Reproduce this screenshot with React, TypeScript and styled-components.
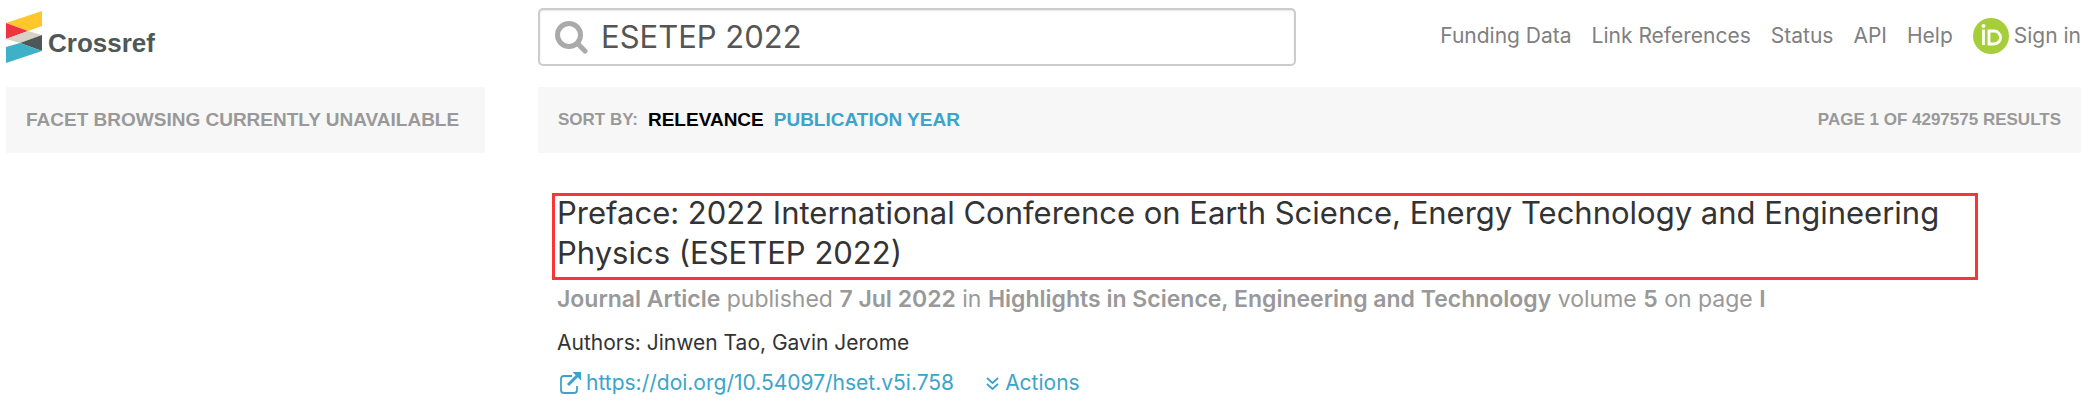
import React from 'react';
import styled, { createGlobalStyle } from 'styled-components';

const GlobalStyle = createGlobalStyle`
  *, *::before, *::after { box-sizing: border-box; }
  body {
    margin: 0;
    background: #fff;
    color: #333;
    font-family: Inter, "Liberation Sans", Arial, sans-serif;
    font-size: 21px;
    line-height: 28px;
  }
  a { color: inherit; text-decoration: none; }
`;

const Page = styled.div`
  padding: 8px 3px 0 6px;
`;

const Columns = styled.div`
  display: grid;
  grid-template-columns: minmax(0, 479fr) minmax(0, 1543fr);
  column-gap: 53px;
`;

const Header = styled(Columns).attrs({ as: 'header' })`
  margin-bottom: 21px;
`;

const Brand = styled.a`
  display: flex;
  align-items: flex-start;
  gap: 6px;
  padding-top: 3px;
`;

const BrandMark = styled.svg`
  width: 36px;
  height: 52px;
`;

const BrandName = styled.span`
  padding-top: 18px;
  color: #4f5858;
  font-family: "Liberation Sans", Arial, sans-serif;
  font-size: 26px;
  font-weight: 700;
  line-height: 28px;
`;

const HeaderMain = styled.div`
  display: flex;
  justify-content: space-between;
  align-items: flex-start;
  gap: 24px;
`;

const SearchForm = styled.form`
  display: flex;
  align-items: center;
  gap: 13px;
  flex: 0 1 758px;
  height: 58px;
  padding: 0 15px;
  border: 2px solid #ccc;
  border-radius: 5px;
  box-shadow: inset 0 1px 2px rgba(0, 0, 0, 0.1);
`;

const SearchIcon = styled.svg`
  flex: none;
  width: 33px;
  height: 33px;
`;

const SearchInput = styled.input`
  flex: 1;
  min-width: 0;
  padding: 0;
  border: 0;
  outline: 0;
  background: transparent;
  color: #555;
  font: inherit;
  font-size: 31px;
  line-height: 40px;
`;

const Nav = styled.nav`
  display: flex;
  align-items: center;
  gap: 20px;
  height: 56px;
  color: #808080;
  white-space: nowrap;
`;

const SignIn = styled.a`
  display: flex;
  align-items: center;
  gap: 5px;
`;

const OrcidIcon = styled.svg`
  width: 36px;
  height: 36px;
`;

const Bar = styled.div`
  display: flex;
  align-items: center;
  gap: 10px;
  height: 66px;
  padding: 0 20px;
  background: #f7f7f7;
  color: #999;
  font-family: "Liberation Sans", Arial, sans-serif;
  font-size: 19px;
  font-weight: 700;
  white-space: nowrap;
`;

const BarLabel = styled.span`
  font-size: 17px;
`;

const ResultCount = styled(BarLabel)`
  margin-left: auto;
`;

const SortLink = styled.a<{ $active?: boolean }>`
  color: ${(p) => (p.$active ? '#000' : '#3ba4cc')};
`;

const Result = styled.article`
  padding: 40px 103px 0 19px;
`;

const Title = styled.h2`
  position: relative;
  margin: 0;
  color: #333;
  font-size: 31px;
  font-weight: 400;
  line-height: 40px;

  /* highlight frame drawn over the heading */
  &::after {
    content: '';
    position: absolute;
    inset: 0 0 -7px -5px;
    border: 3px solid #fb3535;
    pointer-events: none;
  }
`;

const Meta = styled.p`
  margin: 10px 0 0;
  color: #999;
  font-size: 23px;
  line-height: 32px;

  b { font-weight: 600; }
`;

const Authors = styled.p`
  margin: 14px 0 0;
`;

const Links = styled.div`
  display: flex;
  gap: 32px;
  margin-top: 12px;
  color: #3ba4cc;
`;

const IconLink = styled.a`
  display: flex;
  align-items: center;
  gap: 5px;
`;

const ActionsButton = styled.button`
  display: flex;
  align-items: center;
  gap: 6px;
  padding: 0;
  border: 0;
  background: none;
  color: inherit;
  font: inherit;
  cursor: pointer;
`;

const LinkIcon = styled.svg`
  width: 21px;
  height: 22px;
  margin-left: 3px;
`;

const ChevronsIcon = styled.svg`
  width: 13px;
  height: 14px;
`;

const navItems = ['Funding Data', 'Link References', 'Status', 'API', 'Help'];

export default function App() {
  return (
    <>
      <GlobalStyle />
      <Page>
        <Header>
          <Brand href="#">
            <BrandMark viewBox="0 0 36 52" aria-hidden="true">
              <path d="M0 12 36 0v15L22 20Z" fill="#ffc72c" />
              <path d="M0 12 22 20 0 28Z" fill="#ef3340" />
              <path d="M0 28 22 20 36 24 14 32Z" fill="#d8d2c4" />
              <path d="M36 24 14 32 36 40Z" fill="#4f5858" />
              <path d="M0 36 14 32 36 40 0 52Z" fill="#3eb1c8" />
            </BrandMark>
            <BrandName>Crossref</BrandName>
          </Brand>
          <HeaderMain>
            <SearchForm role="search">
              <SearchIcon viewBox="0 0 33 33" fill="none" stroke="#aaa" aria-hidden="true">
                <circle cx="14" cy="14" r="11.500" strokeWidth="5" />
                <path d="m22.500 22.500 7.500 7.500" strokeWidth="5" strokeLinecap="round" />
              </SearchIcon>
              <SearchInput aria-label="Search" defaultValue="ESETEP 2022" />
            </SearchForm>
            <Nav>
              {navItems.map((item) => (
                <a key={item} href="#">{item}</a>
              ))}
              <SignIn href="#">
                <OrcidIcon viewBox="0 0 36 36" fill="none" aria-hidden="true">
                  <circle cx="18" cy="18" r="18" fill="#a6ce39" />
                  <circle cx="10.500" cy="8" r="2" fill="#fff" />
                  <path d="M10.500 11.500V27M16 13h5a6.500 6.500 0 0 1 0 13h-5Z" stroke="#fff" strokeWidth="2.800" />
                </OrcidIcon>
                Sign in
              </SignIn>
            </Nav>
          </HeaderMain>
        </Header>
        <Columns>
          <aside>
            <Bar>FACET BROWSING CURRENTLY UNAVAILABLE</Bar>
          </aside>
          <main>
            <Bar>
              <BarLabel>SORT BY:</BarLabel>
              <SortLink href="#" $active>RELEVANCE</SortLink>
              <SortLink href="#">PUBLICATION YEAR</SortLink>
              <ResultCount>PAGE 1 OF 4297575 RESULTS</ResultCount>
            </Bar>
            <Result>
              <Title>
                Preface: 2022 International Conference on Earth Science, Energy Technology and Engineering Physics (ESETEP 2022)
              </Title>
              <Meta>
                <b>Journal Article</b> published <b>7 Jul 2022</b> in{' '}
                <b>Highlights in Science, Engineering and Technology</b> volume <b>5</b> on page <b>I</b>
              </Meta>
              <Authors>Authors: Jinwen Tao, Gavin Jerome</Authors>
              <Links>
                <IconLink href="#">
                  <LinkIcon viewBox="0 0 21 22" fill="none" stroke="currentColor" aria-hidden="true">
                    <path d="M12 4H4a3 3 0 0 0-3 3v11a3 3 0 0 0 3 3h10a3 3 0 0 0 3-3v-4" strokeWidth="1.800" />
                    <path d="m8 13 9-9" strokeWidth="3" />
                    <path d="M12.500 0H21v8.500Z" fill="currentColor" stroke="none" />
                  </LinkIcon>
                  https://doi.org/10.54097/hset.v5i.758
                </IconLink>
                <ActionsButton type="button">
                  <ChevronsIcon viewBox="0 0 13 14" fill="none" stroke="currentColor" strokeWidth="1.800" aria-hidden="true">
                    <path d="m1 2 5.500 5L12 2M1 8l5.500 5L12 8" />
                  </ChevronsIcon>
                  Actions
                </ActionsButton>
              </Links>
            </Result>
          </main>
        </Columns>
      </Page>
    </>
  );
}
